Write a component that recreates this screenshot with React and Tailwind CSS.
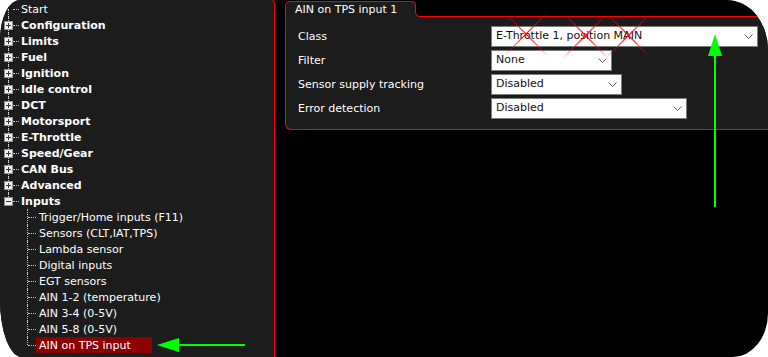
import React from "react";

const topItems = ["Configuration", "Limits", "Fuel", "Ignition", "Idle control", "DCT", "Motorsport", "E-Throttle", "Speed/Gear", "CAN Bus", "Advanced"];
const inputItems = ["Trigger/Home inputs (F11)", "Sensors (CLT,IAT,TPS)", "Lambda sensor", "Digital inputs", "EGT sensors", "AIN 1-2 (temperature)", "AIN 3-4 (0-5V)", "AIN 5-8 (0-5V)", "AIN on TPS input"];

const dot = "border-dotted border-[#c8c8c8]";

function ToggleBox({ open }) {
  return (
    <span className="absolute left-[4px] top-[4px] flex h-[9px] w-[9px] items-center justify-center border border-[#8e8e8e] bg-[#f2f2f2]">
      <svg width="7" height="7" viewBox="0 0 7 7" shapeRendering="crispEdges">
        <rect x="1" y="3" width="5" height="1" fill="#1f3574" />
        {!open && <rect x="3" y="1" width="1" height="5" fill="#1f3574" />}
      </svg>
    </span>
  );
}

function TopRow({ label, kind }) {
  // kind: "start" | "closed" | "open"
  const line = kind === "start" ? "top-2 h-2" : kind === "open" ? "top-0 h-2" : "top-0 h-full";
  return (
    <div className="flex h-4 items-center">
      <div className="relative h-full w-[13px] shrink-0">
        <span className={`absolute left-[8px] border-l ${dot} ${line}`} />
        {kind !== "start" && <ToggleBox open={kind === "open"} />}
      </div>
      <span className={`w-[6px] border-t ${dot}`} />
      <span className={`ml-[2px] pt-px leading-4 text-white ${kind === "start" ? "" : "font-bold"}`}>{label}</span>
    </div>
  );
}

function ChildRow({ label, last, selected }) {
  return (
    <div className="flex h-4 items-center">
      <div className="relative h-full w-[28px] shrink-0">
        <span className={`absolute left-[27px] top-0 border-l ${dot} ${last ? "h-2" : "h-full"}`} />
      </div>
      <span className={`w-[8px] border-t ${dot}`} />
      <span className={`h-4 pl-[3px] pt-px leading-4 text-white ${selected ? "w-[116px] bg-[#8b0000]" : ""}`}>{label}</span>
    </div>
  );
}

function Select({ value, width }) {
  return (
    <div className={`flex h-[21px] items-center justify-between border border-[#7c7c7c] bg-white pl-[4px] pr-[4px] text-[#111] ${width}`}>
      <span>{value}</span>
      <svg width="9" height="5" viewBox="0 0 9 5">
        <polyline points="0.5,0.5 4.5,4.5 8.5,0.5" fill="none" stroke="#606060" strokeWidth="1" />
      </svg>
    </div>
  );
}

const rows = [
  { label: "Class", value: "E-Throttle 1, position MAIN", width: "w-[267px]" },
  { label: "Filter", value: "None", width: "w-[121px]" },
  { label: "Sensor supply tracking", value: "Disabled", width: "w-[131px]" },
  { label: "Error detection", value: "Disabled", width: "w-[196px]" },
];

function Cross({ x, y, s }) {
  return (
    <g>
      <line x1={x} y1={y} x2={x + s} y2={y + s} stroke="url(#fade)" strokeWidth="1.2" />
      <line x1={x + s} y1={y} x2={x} y2={y + s} stroke="url(#fade)" strokeWidth="1.2" />
    </g>
  );
}

export default function App() {
  return (
    <div className="relative h-[357px] w-[768px] overflow-hidden bg-white font-['DejaVu_Sans',Verdana,sans-serif] text-[11px]">
      <div className="flex h-full overflow-hidden rounded-tl-[20px_40px] rounded-tr-[41px_50px] rounded-bl-[22px_57px] rounded-br-[35px_44px] bg-black">
        {/* Tree */}
        <div className="-mt-px h-[358px] w-[275px] shrink-0 rounded-tr-[5px] border-t border-r border-[#ff0000] bg-[#1c1c1c] pt-px">
          <TopRow label="Start" kind="start" />
          {topItems.map(t => <TopRow key={t} label={t} kind="closed" />)}
          <TopRow label="Inputs" kind="open" />
          {inputItems.map((t, i) => (
            <ChildRow key={t} label={t} last={i === inputItems.length - 1} selected={i === inputItems.length - 1} />
          ))}
        </div>

        {/* Group box */}
        <div className="ml-[10px] flex flex-1 flex-col pt-px">
          <div className="flex h-4">
            <div className="w-[131px] shrink-0 rounded-t-[5px] border-t border-l border-r border-[#ff0000] bg-[#1c1c1c] pl-[9px] leading-[15px] text-white">
              AIN on TPS input 1
            </div>
            <div className="-ml-px h-[8px] flex-1 self-end bg-[#1c1c1c]">
              <div className="h-full rounded-bl-[5px] border-l border-b border-[#ff0000] bg-black" />
            </div>
          </div>
          <div className="flex flex-col gap-[3px] rounded-bl-[6px] border-l border-b border-[#ff0000] bg-[#1c1c1c] pt-[9px] pb-[10px] pl-[12px]">
            {rows.map(r => (
              <div key={r.label} className="flex items-center">
                <span className="w-[193px] shrink-0 pt-[2px] text-white">{r.label}</span>
                <Select value={r.value} width={r.width} />
              </div>
            ))}
          </div>
        </div>
      </div>

      {/* Annotations */}
      <svg className="pointer-events-none absolute left-0 top-0" width="768" height="357">
        <defs>
          <linearGradient id="fade" x1="0" y1="0" x2="1" y2="0">
            <stop offset="0" stopColor="#ff0000" stopOpacity="0.1" />
            <stop offset="0.5" stopColor="#ff0000" stopOpacity="1" />
            <stop offset="1" stopColor="#ff0000" stopOpacity="0.1" />
          </linearGradient>
        </defs>
        <Cross x={505} y={13} s={42} />
        <Cross x={564} y={14} s={43} />
        <Cross x={607} y={14} s={43} />
        <rect x="714" y="55" width="2" height="152" fill="#00ff00" />
        <polygon points="715,34 708,56 722,56" fill="#00ff00" />
        <rect x="178" y="344" width="67" height="2" fill="#00ff00" />
        <polygon points="157,345 179,338 179,352" fill="#00ff00" />
      </svg>
    </div>
  );
}
